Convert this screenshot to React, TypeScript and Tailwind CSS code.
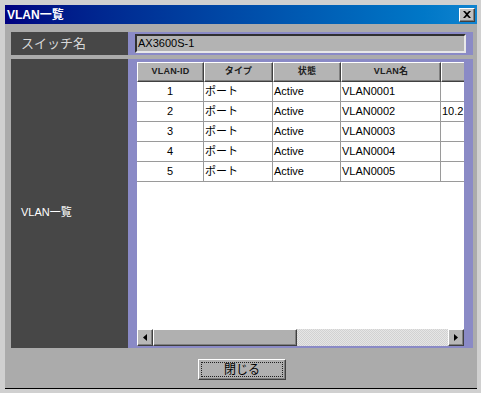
import React from "react";

const ROWS = [
  { id: "1", type: "ポート", state: "Active", name: "VLAN0001", ip: "" },
  { id: "2", type: "ポート", state: "Active", name: "VLAN0002", ip: "10.2" },
  { id: "3", type: "ポート", state: "Active", name: "VLAN0003", ip: "" },
  { id: "4", type: "ポート", state: "Active", name: "VLAN0004", ip: "" },
  { id: "5", type: "ポート", state: "Active", name: "VLAN0005", ip: "" },
];

const FONT = { fontFamily: '"Liberation Sans", "Noto Sans CJK JP", sans-serif' };

const raised =
  "border border-t-white border-l-white border-r-[#404040] border-b-[#404040] shadow-[inset_-1px_-1px_0_#808080]";

function HeaderCell({ w, children }: { w: string; children?: React.ReactNode }) {
  return (
    <div
      className={`${w} h-[20px] shrink-0 ${raised} bg-[#b4b4b4] flex items-center justify-center text-[9px] font-bold text-[#202020] tracking-wide`}
    >
      {children}
    </div>
  );
}

function Cell({ w, center, children }: { w: string; center?: boolean; children?: React.ReactNode }) {
  return (
    <div
      className={`${w} h-[20px] shrink-0 border-r border-b border-[#9a9a9a] flex items-center px-[1px] text-[11px] text-black ${
        center ? "justify-center" : ""
      }`}
    >
      {children}
    </div>
  );
}

export default function App() {
  return (
    <div
      className="w-[481px] h-[393px] bg-[#d0d0d0] pt-[5px] pl-[5px] pr-[4px] flex flex-col overflow-hidden"
      style={FONT}
    >
      {/* title bar */}
      <div className="h-[19px] shrink-0 bg-gradient-to-r from-[#000080] to-[#1084d0] flex items-center justify-between pl-[2px] pr-[2px]">
        <span className="text-white text-[12px] font-bold leading-none">VLAN一覧</span>
        <div className={`w-[16px] h-[14px] ${raised} bg-[#c0c0c0] flex items-center justify-center`}>
          <svg width="8" height="7" viewBox="0 0 8 7">
            <path d="M0 0h2l2 2 2-2h2L5 3.5 8 7H6L4 5 2 7H0l3-3.5z" fill="#000" />
          </svg>
        </div>
      </div>

      {/* body */}
      <div className="flex-1 bg-[#ababab] border-b border-black pt-[8px] pl-[6px] pr-[4px] flex flex-col">
        <div className="flex h-[23px] shrink-0">
          <div className="w-[117px] shrink-0 bg-[#474747] text-[#d8d8d8] text-[13px] flex items-center pl-[10px]">
            スイッチ名
          </div>
          <div className="flex-1 bg-[#8a8ac6] py-[2px] pl-[7px] pr-[7px]">
            <div className="h-full bg-[#b3b3b3] border-2 border-t-[#303030] border-l-[#303030] border-r-[#e8e8e8] border-b-[#e8e8e8] flex items-center pl-[1px] text-[11px] text-black">
              AX3600S-1
            </div>
          </div>
        </div>

        <div className="flex h-[289px] mt-[4px] shrink-0">
          <div className="w-[117px] shrink-0 bg-[#474747] text-white text-[11px] flex items-center pl-[10px] pt-[18px]">
            VLAN一覧
          </div>
          <div className="flex-1 min-w-0 bg-[#8a8ac6] pt-[3px] pb-[2px] pl-[9px] pr-[9px]">
            <div className="h-full bg-white flex flex-col">
              <div className="flex-1 overflow-hidden">
                <div className="flex">
                  <HeaderCell w="w-[67px]">VLAN-ID</HeaderCell>
                  <HeaderCell w="w-[69px]">タイプ</HeaderCell>
                  <HeaderCell w="w-[68px]">状態</HeaderCell>
                  <HeaderCell w="w-[100px]">VLAN名</HeaderCell>
                  <HeaderCell w="w-[40px]" />
                </div>
                {ROWS.map((r) => (
                  <div key={r.id} className="flex">
                    <Cell w="w-[67px]" center>
                      {r.id}
                    </Cell>
                    <Cell w="w-[69px]">{r.type}</Cell>
                    <Cell w="w-[68px]">{r.state}</Cell>
                    <Cell w="w-[100px]">{r.name}</Cell>
                    <Cell w="w-[40px]">{r.ip}</Cell>
                  </div>
                ))}
              </div>

              {/* horizontal scrollbar */}
              <div className="h-[17px] shrink-0 flex bg-[repeating-conic-gradient(#e6e6e6_0_25%,#d2d2d2_0_50%)] bg-[length:2px_2px]">
                <div className={`w-[16px] h-full shrink-0 ${raised} bg-[#b8b8b8] flex items-center justify-center`}>
                  <svg width="4" height="7" viewBox="0 0 4 7">
                    <path d="M4 0v7L0 3.5z" fill="#000" />
                  </svg>
                </div>
                <div className={`w-[144px] h-full shrink-0 ${raised} bg-[#b0b0b0]`} />
                <div className="flex-1" />
                <div className={`w-[16px] h-full shrink-0 ${raised} bg-[#b8b8b8] flex items-center justify-center`}>
                  <svg width="4" height="7" viewBox="0 0 4 7">
                    <path d="M0 0v7l4-3.5z" fill="#000" />
                  </svg>
                </div>
              </div>
            </div>
          </div>
        </div>

        <div className="flex justify-center mt-[11px]">
          <button
            className={`w-[88px] h-[21px] ${raised} bg-[#b0b0b0] p-[2px]`}
            style={FONT}
          >
            <div className="w-full h-full border border-dotted border-[#202020] flex items-center justify-center text-[12px] text-black leading-none">
              閉じる
            </div>
          </button>
        </div>
      </div>
      <div className="h-[4px] shrink-0" />
    </div>
  );
}
